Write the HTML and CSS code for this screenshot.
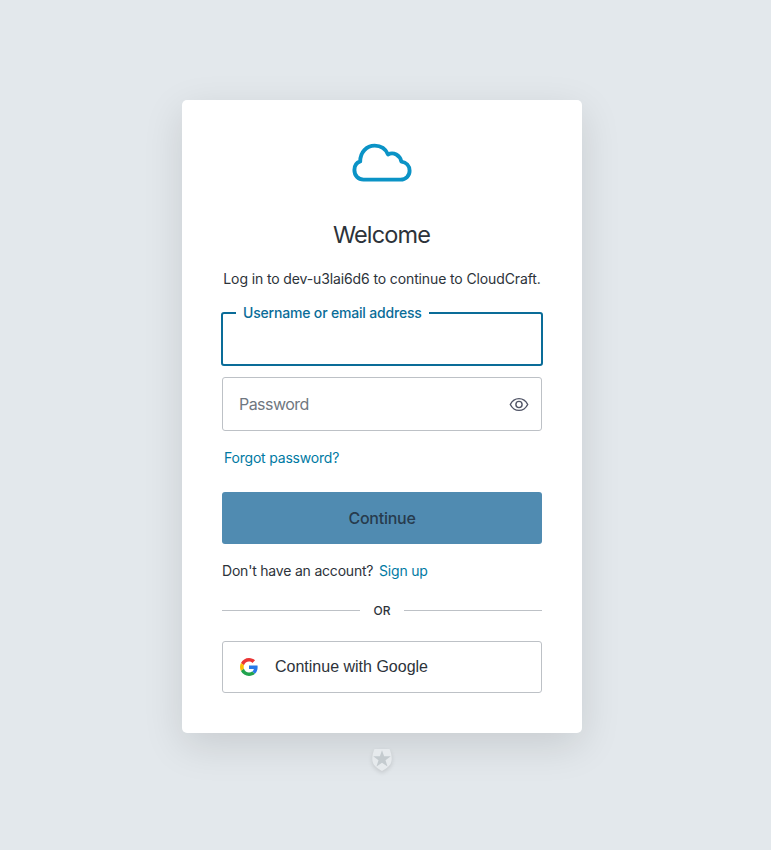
FILE: index.html
```html
<!DOCTYPE html>
<html lang="en">
<head>
<meta charset="utf-8">
<title>Log in | CloudCraft</title>
<link rel="stylesheet" href="styles.css">
</head>
<body>
<main class="page">
  <section class="card">
    <svg class="logo" viewBox="0 0 60 40" fill="none" stroke="#0b93c6" stroke-width="3.900" stroke-linejoin="round"><path d="M11.500 36.600H48.500C53.800 36.600 57.600 32.800 57.600 27.800C57.600 22.800 54.200 19.200 49.400 18.600C48 12.200 41.600 8.600 36 11.400C33.600 5.600 28.400 2.600 22.700 2.600C14.500 2.600 8.200 9.200 8.200 18.400C4.600 19.600 2.400 22.800 2.400 27C2.400 32.600 6.200 36.600 11.500 36.600Z"/></svg>
    <h1 class="title">Welcome</h1>
    <p class="intro">Log in to dev-u3lai6d6 to continue to CloudCraft.</p>
    <form class="form">
      <div class="field field-active"><label class="float-label">Username or email address</label></div>
      <div class="field field-password">
        <span class="placeholder">Password</span>
        <svg class="eye" viewBox="0 0 20 16" fill="none" stroke="#505466" stroke-width="1.400"><path d="M1.300 8.500C3.200 4.700 6.300 2.600 10 2.600S16.800 4.700 18.700 8.500C16.800 12.300 13.700 14.400 10 14.400S3.200 12.300 1.300 8.500Z"/><circle cx="10" cy="8.500" r="3.100"/></svg>
      </div>
      <a class="link forgot">Forgot password?</a>
      <button class="submit" type="button">Continue</button>
    </form>
    <p class="signup">Don't have an account? <a class="link">Sign up</a></p>
    <div class="divider"><span class="or">OR</span></div>
    <button class="google" type="button">
      <svg class="google-icon" viewBox="0 0 48 48"><path fill="#EA3535" d="M24 9.500c3.540 0 6.710 1.220 9.210 3.600l6.850-6.850C35.900 2.380 30.470 0 24 0 14.620 0 6.510 5.380 2.560 13.220l7.980 6.190C12.430 13.720 17.740 9.500 24 9.500z"/><path fill="#2878e8" d="M46.980 24.550c0-1.570-.15-3.090-.38-4.550H24v9.020h12.940c-.58 2.960-2.260 5.480-4.780 7.180l7.730 6c4.510-4.180 7.090-10.360 7.090-17.650z"/><path fill="#FBBC05" d="M10.530 28.590c-.48-1.450-.76-2.990-.76-4.590s.27-3.140.76-4.590l-7.980-6.190C.920 16.460 0 20.120 0 24s.92 7.540 2.560 10.780l7.970-6.190z"/><path fill="#21a34e" d="M24 48c6.480 0 11.930-2.130 15.890-5.810l-7.730-6c-2.150 1.450-4.920 2.300-8.160 2.300-6.260 0-11.570-4.220-13.470-9.910l-7.980 6.190C6.510 42.620 14.620 48 24 48z"/></svg>
      <span>Continue with Google</span>
    </button>
  </section>
  <svg class="badge" viewBox="0 0 20 22"><path fill="#e6eaed" d="M2.500 0H17.500C19 3.500 20.200 8 19.500 12C18.800 16.500 14.500 19.700 10 22C5.500 19.700 1.200 16.500.5 12C-.2 8 1 3.500 2.500 0Z"/><path fill="#c4cbcf" d="M10 1.200L12.100 7.300H18.800L13.500 11.200L15.500 17.400L10 13.700L4.500 17.400L6.500 11.200L1.200 7.300H7.900Z"/></svg>
</main>
</body>
</html>
```

FILE: styles.css
```css
* { box-sizing: border-box; }
body {
  margin: 0;
  background: #e3e8ec;
  color: #2d333a;
  font-family: Inter, sans-serif;
}
.page {
  min-height: 850px;
  padding: 100px 7px 0 0;
  display: flex;
  flex-direction: column;
  align-items: center;
}
.card {
  width: 400px;
  height: 633px;
  padding: 43px 40px 40px;
  display: flex;
  flex-direction: column;
  background: #fff;
  border-radius: 5px;
  box-shadow: 0 12px 40px rgba(0, 0, 0, .12);
}
.logo { width: 60px; height: 40px; align-self: center; }
.title {
  margin: 37px 0 0;
  font-size: 23.5px;
  line-height: 30px;
  font-weight: 400;
  letter-spacing: -.85px;
  text-indent: -1px;
  text-align: center;
}
.intro {
  margin: 18px 0 1px;
  font-size: 14px;
  line-height: 21px;
  letter-spacing: -.12px;
  white-space: nowrap;
  text-align: center;
}
.form { display: flex; flex-direction: column; }
.field {
  height: 54px;
  border-radius: 3px;
}
.field-active {
  margin: 22px -1px 0;
  border: 2px solid #0a6c98;
  position: relative;
}
.float-label {
  position: absolute;
  left: 13px;
  top: -10px;
  padding: 0 7px;
  background: #fff;
  color: #0a6c98;
  font-size: 14px;
  line-height: 17px;
  font-weight: 500;
  letter-spacing: -.18px;
  white-space: nowrap;
}
.field-password {
  margin-top: 11px;
  padding: 0 12px 0 16px;
  border: 1px solid #bdc1c6;
  display: flex;
  align-items: center;
  justify-content: space-between;
}
.placeholder { color: #6f7780; font-size: 16px; letter-spacing: -.55px; }
.eye { width: 20px; height: 16px; }
.link { color: #007aa3; }
.forgot {
  margin: 17px 0 0 2px;
  font-size: 14px;
  line-height: 20px;
  letter-spacing: -.2px;
}
.submit {
  margin-top: 24px;
  height: 52px;
  border: 0;
  border-radius: 3px;
  background: #508bb1;
  color: #273b4d;
  font: 500 16px Inter, sans-serif;
  letter-spacing: -.25px;
}
.signup {
  margin: 17px 0 0;
  font-size: 14px;
  line-height: 20px;
  letter-spacing: -.2px;
}
.signup .link { margin-left: 2px; }
.divider {
  margin-top: 19px;
  height: 20px;
  display: flex;
  align-items: center;
}
.divider::before, .divider::after {
  content: "";
  flex: 1;
  height: 1px;
  background: #bdc1c6;
}
.or {
  width: 44px;
  text-align: center;
  font-size: 12px;
  font-weight: 500;
}
.google {
  margin-top: 21px;
  height: 52px;
  padding: 0 17px;
  display: flex;
  align-items: center;
  gap: 17px;
  border: 1px solid #bdc1c6;
  border-radius: 3px;
  background: #fff;
  color: #2d333a;
  font: 400 16px "Liberation Sans", Arial, sans-serif;
}
.google-icon { width: 18px; height: 18px; }
.badge {
  margin-top: 16px;
  width: 20px;
  height: 22px;
  filter: drop-shadow(0 2px 2px rgba(0, 0, 0, .12));
  overflow: visible;
}
```
